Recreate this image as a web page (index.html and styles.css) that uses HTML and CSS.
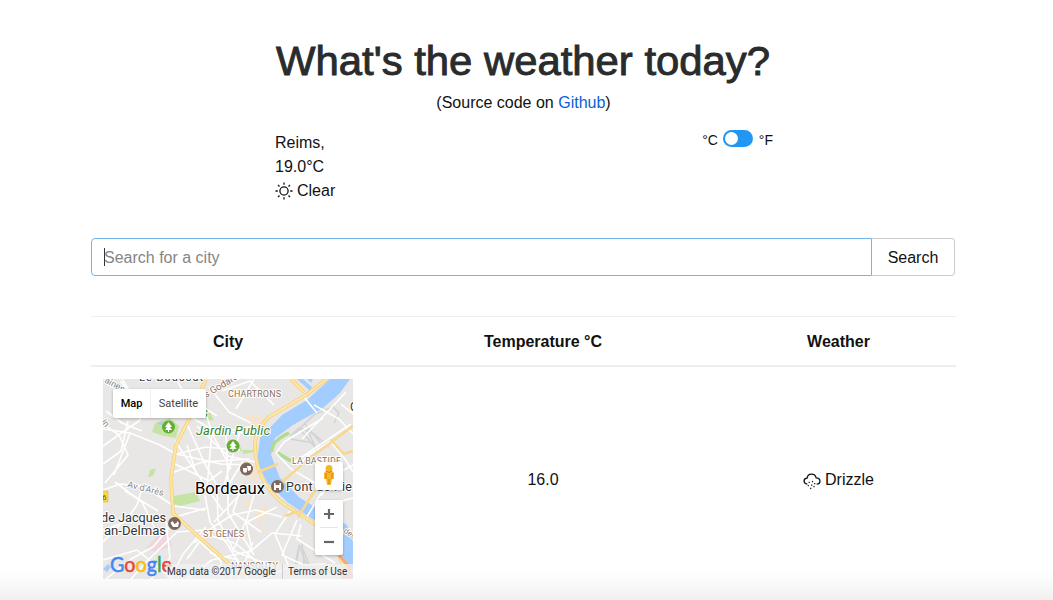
FILE: index.html
```html
<!DOCTYPE html>
<html lang="en">
<head>
<meta charset="utf-8">
<title>What's the weather today?</title>
<link rel="stylesheet" href="styles.css">
</head>
<body>
<header class="header">
  <h1 class="title"><svg class="title-svg" width="504" height="48"><text x="5" y="36" textLength="494" lengthAdjust="spacingAndGlyphs">What's the weather today?</text></svg></h1>
  <p class="source">(Source code on <a href="#">Github</a>)</p>
  <div class="local">
    <div class="current">
      <div>Reims,</div>
      <div>19.0°C</div>
      <div class="condition"><svg class="sun" width="18" height="18" viewBox="0 0 18 18"><circle cx="9" cy="9" r="4.1"/><path d="M9 .5v2.3M9 15.2v2.3M.5 9h2.3M15.2 9h2.3M3 3l1.500 1.500M13.500 13.500L15 15M3 15l1.500-1.500M13.500 4.500L15 3"/></svg><span>Clear</span></div>
    </div>
    <div class="units"><span>°C</span><span class="switch"><span class="knob"></span></span><span>°F</span></div>
  </div>
</header>
<main class="main">
  <form class="search">
    <div class="field"><span class="caret"></span><span class="placeholder">Search for a city</span></div>
    <button class="button" type="button">Search</button>
  </form>
  <div class="table">
    <div class="row head"><div>City</div><div>Temperature °C</div><div>Weather</div></div>
    <div class="row body">
      <div class="map-cell"><div class="map">
        <svg class="map-art" width="250" height="200" viewBox="0 0 250 200">
          <rect width="250" height="200" fill="#e8e7e5"/>
          <g fill="#f3e3cf"><path d="M142 38l9-2 12 2-9 12-5 9-4-8zM141 51l8 1-1 5-6-1zM139 84l10-2 6 9v13l-8-4zM152 131l12-5 2 8-8 9-5-2zM158 142l3 11-6-1zM143 120l7 5-3 4-7-2z"/></g>
          <g fill="#c5e3a4"><path d="M52 44l15-5 9 8-3 12-12-2-12-4zM47 91l6-2-3 8-5 1zM71 117l22-4 4 9-20 5-6-2zM101 36l6-3 4 8-8 1zM126 60l9 3 5 10-10-4zM140 71h12v2l-12 2z"/></g>
          <path d="M54 157l12-2 3 12-17 6-9-4z" fill="#efd7de"/>
          <path d="M227 0h20l-10 14-17 15-30 17-18 13-4 17 9 23 20 20 17 10 30 17 6 17v30l-5-7-15-23-16-20-30-20-20-20-10-20 3-24 22-23 25-15zM56 43l4-1-1 4-4-1zM0 190l5-5 3 3-4 5zM194 0h6l9 8-2 4zM204 0h6l-2 4z" fill="#a3ccff"/>
          <path d="M169 73q-1-11 17-19M173 73l15 9" fill="none" stroke="#b2db92" stroke-width="3.500"/>
          <g fill="none" stroke="#d2d3d4" stroke-width="1.500"><path d="M187 57l9-8 15 18M191 56l11-12 12 29M194 52l18-17 18-7 6 6-5 10M197 49l14 6 15 13M201 44l11 13 10 12M187 60l24 4M193 194l3-28 11 28M198 166l8 19 13 10M196 167l-6 29M199 163l3 34"/></g>
          <g fill="none" stroke="#fff" stroke-width="1.600" stroke-linejoin="round">
            <path d="M19 0l8 13 16 17-7 12-16 11-20 14M0 50l27 4 30 12 16 9 45 10 32 1M0 85l18-13 7-30M2 104l23-28-9-20-16-11M27 54l-16 42M3 32l16 12 20 8M17 2l22 25 13 8M73 0l10 17 31 20M73 75l30-7 34 3M68 94l32-11 46-3M72 62l17 25 31 45M84 45l17 38 15 27M88 38l25 15 37 1M98 21l12 35 18 34M106 8l20 25 22 11M119 12l28-10 24 24M133 30l18-30M106 55l45-8M93 94l-9-28M109 52l-5 57M123 52l2 51M137 53l-16 53M94 47l31 30 27 6M70 84l36 18 13-10"/>
            <path d="M0 111l17-6 23 2 31 20 31 4M0 151l22-8 12-17 6-20M12 103l27 20 14 29M22 112l33 20M0 163l17-17M3 200l25-20 22-12 26-31 27-8M28 200l17-19 29-28 27-2M0 181l34-10 35 29M48 200l19-21-4-37M68 199l12-24 23-27"/>
            <path d="M84 180l20-28 25-16 24-5 26 7M84 200l25-19 39-9 21-18 30 3M102 116l5 27 18 23 20 34M114 109l1 32 16 31 35 14M125 104v30l26 42M140 82l-15 25M139 105l-9 28 28 20M143 109l-32 34M153 109l-10 34 6 28M174 128l-32 16-12 28M187 132l-15 23 14 33-26 12M194 141l-15 35 22 10 20-1 19 10M198 145l-4 15 38 24M150 163l-15 37M132 164l33 28M107 174l28 7-8 19M119 200l-1-18-22-20M91 164l11-9 29 9"/>
            <path d="M220 39l-39 24-8 11 15 16 24 14M201 18l13 16M211 26l25 14 14 15M243 13l-44 47M190 84l58-39M189 96l15-19 24-15M228 63l14 17 8 13M238 25l12 10M218 117l12-20 20-11M202 141l21-35M211 143l21-19 18-5"/>
          </g>
          <g fill="none" stroke="#f3cd77" stroke-width="3.600" stroke-linejoin="round"><path d="M225-1l-22 17-37 22q-12 12-14 25 0 18 5 31 8 18 21 29l34 22q21 18 30 46M103 0l-7 16-10 24-13 26-5 33 2 35 27 25 43 38M188 0l13 13"/></g>
          <g fill="none" stroke="#ffe6a4" stroke-width="2.200"><path d="M225-1l-22 17-37 22q-12 12-14 25 0 18 5 31 8 18 21 29l34 22q21 18 30 46M103 0l-7 16-10 24-13 26-5 33 2 35 27 25 43 38M188 0l13 13"/><path d="M179 103l28-24 43-32M228 61l13 14 9-3M195 138l17-27M155 93l20-8M182 137l13-5" stroke="#f7d88d" stroke-width="2.500"/></g>
          <path d="M236 176l10 12 2 12" fill="none" stroke="#f4aa70" stroke-width="3"/><path d="M238 195h12v5h-12z" fill="#efb5b5"/>
          <path d="M-1 112h6v11h-6z" fill="#ffd635" stroke="#c9b241" stroke-width=".5"/><text x="-1" y="121" font-size="8" fill="#665b28">6</text>
          <g class="parks"><circle cx="65.500" cy="48" r="6.500"/><circle cx="130" cy="67" r="6.500"/><path d="M65.500 43l-3.500 5h2l-2 3h3v2h1v-2h3l-2-3h2zM130 62l-3.500 5h2l-2 3h3v2h1v-2h3l-2-3h2z" fill="#fff"/></g>
          <g class="places"><circle cx="143.500" cy="90" r="6.500"/><circle cx="174.500" cy="107.500" r="6.500"/><circle cx="71.500" cy="144.500" r="6.500"/><path d="M140 89h4v4q-3 2-4-1zM144 87h4v4l-3 1zM171 104h1.500v2h4v-2h1.500v7h-2v-2h-3v2h-2zM67.500 144l2-2 2 3 2-1 1-2 1.500 2-1 4h-5z" fill="#fff"/></g>
          <g class="labels">
            <text x="36" y="2" font-size="11" textLength="64">Le Bouscat</text>
            <text transform="translate(1 3) rotate(29)" font-size="9" class="soft">aines</text><text transform="translate(-2 43) rotate(52)" font-size="9" class="soft">in</text>
            <text transform="translate(103 19) rotate(-31)" font-size="9.500" class="brown">s Godard</text>
            <text x="125" y="18" font-size="9" class="brown" textLength="53">CHARTRONS</text>
            <text x="93" y="56" font-size="13" font-style="italic" class="green" textLength="74">Jardin Public</text><text x="99" y="38" font-size="12" font-style="italic" class="green">s</text>
            <text x="189" y="85" font-size="9" class="brown" textLength="49">LA BASTIDE</text>
            <text x="92" y="115" font-size="16" class="city" textLength="70" lengthAdjust="spacingAndGlyphs">Bordeaux</text>
            <text x="183" y="112" font-size="12.500" textLength="66">Pont de Pie</text>
            <text transform="translate(24 108) rotate(14)" font-size="9" class="soft" textLength="37">Av d'Arès</text>
            <text x="-2" y="143" font-size="12" textLength="65" lengthAdjust="spacingAndGlyphs">de Jacques</text><text x="1" y="156" font-size="12" textLength="62" lengthAdjust="spacingAndGlyphs">an-Delmas</text>
            <text x="100" y="158" font-size="9" class="brown" textLength="41">ST GENÈS</text><text x="128" y="190" font-size="9" class="brown" textLength="47">NANSOUTY</text>
            <text transform="translate(240 153) rotate(35)" font-size="8" class="soft">des</text><text x="247" y="32" font-size="12">C</text>
          </g>
        </svg>
        <div class="types"><span class="selected">Map</span><span>Satellite</span></div>
        <div class="google"><svg width="64" height="28"><text x="0" y="18" textLength="62" lengthAdjust="spacingAndGlyphs"><tspan class="blue">G</tspan><tspan class="red">o</tspan><tspan class="yellow">o</tspan><tspan class="blue">g</tspan><tspan class="leaf">l</tspan><tspan class="red">e</tspan></text></svg></div>
        <div class="legal"><span class="copyright">Map data ©2017 Google</span><span class="terms">Terms of Use</span></div>
        <div class="pegman"><svg width="16" height="22" viewBox="0 0 16 22"><path d="M5 7h6l2 2v6h-2l-1 6H6l-1-6H3V9z" fill="#f7b529"/><circle cx="8" cy="4.500" r="3.500" fill="#f7b529"/><path d="M5 7q3 3 6 0M5 9v6M11 9v6M8 15v5" fill="none" stroke="#d98216"/></svg></div>
        <div class="zoom"><span><svg width="12" height="12"><path d="M1 6h10M6 1v10"/></svg></span><span><svg width="12" height="12"><path d="M1 6h10"/></svg></span></div>
      </div></div>
      <div class="temperature">16.0</div>
      <div class="weather"><svg class="drizzle" width="18" height="18" viewBox="0 0 18 18"><path d="M4.300 12.200C.2 11.500-.1 6.500 4.100 6.200 4.600.8 12 .6 13.200 5.900 18 6 18.300 11.800 13.700 12.200"/><path class="drops" d="M6.500 9.700l-.5 1.300M9.800 9l-.5 1.300M12 11l-.5 1.300M5.500 13l-.5 1.300M9 12.500l-.5 1.300M11.200 14l-.5 1.300M8 15.800l-.5 1.300"/></svg><span>Drizzle</span></div>
    </div>
  </div>
</main>
</body>
</html>
```
FILE: styles.css
```css
* { box-sizing: border-box; }
html { height: 100%; background: #fff; }
body {
  margin: 0;
  height: 600px;
  overflow: hidden;
  background: linear-gradient(#fff 572px, #fafafa 582px, #f0f0f0 600px);
  color: #111;
  font: 16px/24px "Liberation Sans", Arial, sans-serif;
}
.header { width: 505px; margin-left: 271px; padding-top: 39px; }
.title { margin: 0; height: 48px; }
.title-svg { display: block; overflow: visible; font-size: 40px; font-weight: 400; fill: #292b2c; stroke: #292b2c; stroke-width: .9px; }
.source { margin: 4px 0 15px; text-align: center; }
.source a { color: #0b5ed7; text-decoration: none; }
.local { display: flex; justify-content: space-between; padding: 0 3px 0 4px; }
.current { padding-top: 1px; }
.condition { display: flex; align-items: center; gap: 4px; }
.sun, .drizzle { fill: none; stroke: #111; stroke-width: 1.3; }
.units { display: flex; align-items: center; height: 17px; font-size: 14px; }
.units > span:first-child, .units > span:last-child { padding-top: 2px; }
.switch { width: 30px; height: 17px; margin: 0 6px 0 5px; padding: 2px; border-radius: 9px; background: #2196f3; }
.knob { display: block; width: 13px; height: 13px; border-radius: 50%; background: #fff; }
.main { width: 865px; margin-left: 91px; padding-top: 35px; }
.search { display: flex; width: 864px; height: 38px; }
.field { flex: 1; display: flex; align-items: center; padding-left: 12px; border: 1px solid #75b5ea; border-radius: 4px 0 0 4px; color: #858585; background: #fff; }
.placeholder { padding-top: 2px; }
.caret { width: 1px; height: 18px; margin-right: -1px; background: #333; }
.button { width: 83px; padding: 2px 0 0; border: 1px solid #ccc; border-left: 0; border-radius: 0 4px 4px 0; background: #fff; color: #111; font: inherit; }
.table { margin-top: 40px; border-top: 1px solid #eceeef; }
.row { display: grid; grid-template-columns: 274px 356px 235px; text-align: center; align-items: center; }
.head { height: 50px; padding-top: 2px; border-bottom: 2px solid #eceeef; font-weight: bold; }
.body { height: 224px; }
.temperature { padding-top: 2px; }
.map-cell { padding-left: 12px; }
.weather { display: flex; align-items: center; justify-content: center; gap: 4px; padding-top: 2px; }
.drizzle { margin-top: 1px; }
.drops { stroke-width: 1.1; }
.map { position: relative; width: 250px; height: 200px; overflow: hidden; font-family: Roboto, sans-serif; text-align: left; }
.map-art { display: block; }
.labels { fill: #333; stroke: #fff; stroke-width: 2px; paint-order: stroke; stroke-linejoin: round; }
.labels .brown { fill: #8a6e5b; }
.labels .soft { fill: #858585; }
.labels .green { fill: #37852d; }
.labels .city { fill: #000; font-weight: 400; }
.parks { fill: #65ae35; }
.places { fill: #80675d; }
.types { position: absolute; left: 10px; top: 10px; display: flex; height: 29px; border-radius: 2px; background: #fff; box-shadow: 0 1px 3px #0004; color: #444; font-size: 11px; line-height: 29px; }
.types span { width: 55px; text-align: center; }
.types .selected { width: 38px; border-right: 1px solid #eee; color: #000; font-weight: 500; }
.google { position: absolute; left: 7px; top: 175px; height: 28px; font: 22px/28px Lato, sans-serif; }
.google svg { display: block; overflow: visible; stroke-width: .5px; }
.blue { fill: #4285f4; stroke: #4285f4; }
.red { fill: #ea4335; stroke: #ea4335; }
.yellow { fill: #fbbc05; stroke: #fbbc05; }
.leaf { fill: #34a853; stroke: #34a853; }
.legal { position: absolute; right: 0; bottom: 0; display: flex; height: 15px; padding: 0 5px 0 1px; background: #f3f3f3b8; color: #333; font-size: 10px; line-height: 15px; white-space: nowrap; }
.copyright { width: 116px; border-right: 1px solid #ccc; }
.terms { width: 65px; padding-left: 5px; }
.pegman, .zoom { position: absolute; left: 212px; width: 28px; background: #fff; border-radius: 2px; box-shadow: 0 1px 3px #0004; }
.pegman { top: 83px; height: 28px; padding: 2px 6px; }
.pegman svg { display: block; }
.zoom { top: 121px; height: 55px; padding: 0 5px; }
.zoom span { display: flex; align-items: center; justify-content: center; height: 28px; }
.zoom span:first-child { border-bottom: 1px solid #e6e6e6; }
.zoom svg { stroke: #666; stroke-width: 2.2; }
```
